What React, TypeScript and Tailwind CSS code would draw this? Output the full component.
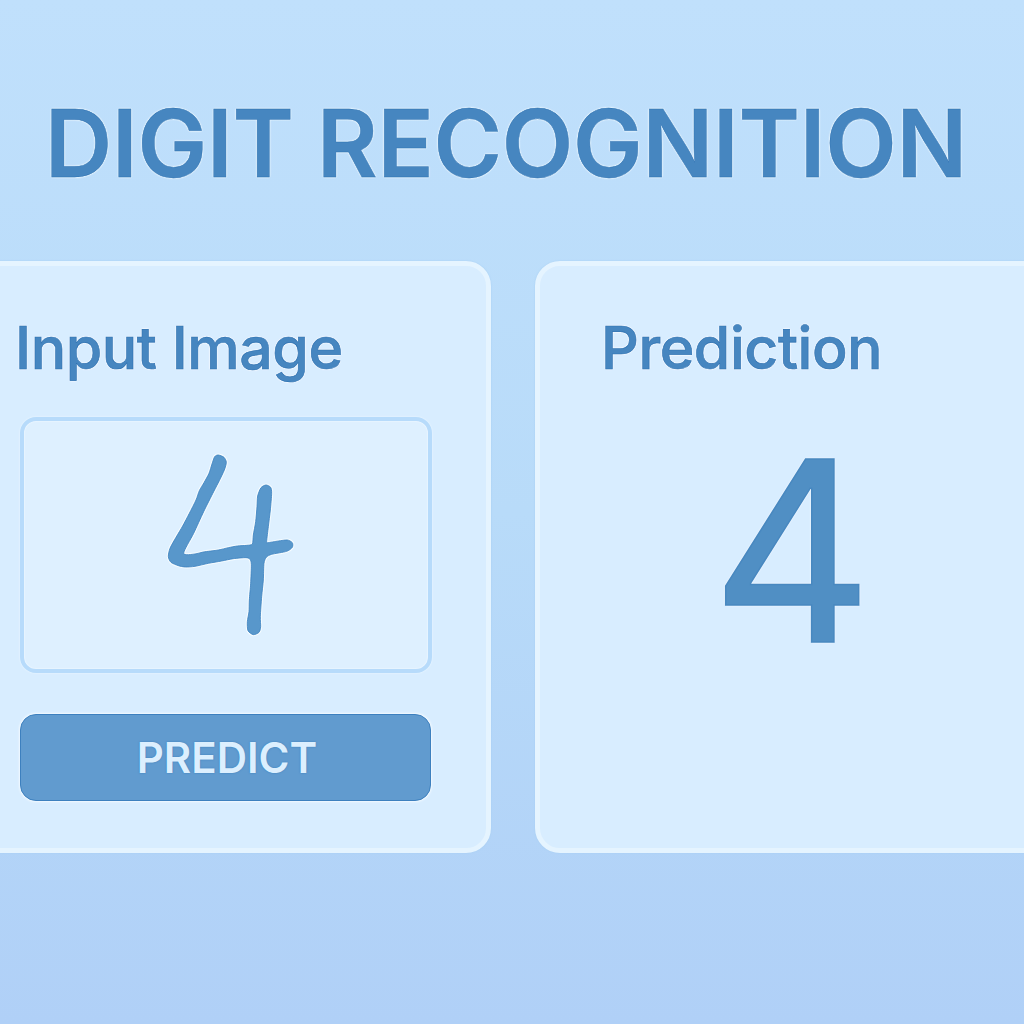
import React from "react";

const outline: [number, number][] = [
  [205, 45], [194, 50], [186, 72], [177, 100], [162, 128], [148, 152], [138, 180], [118, 220], [98, 258],
  [78, 292], [60, 325], [55, 350], [63, 367], [85, 377], [106, 381], [135, 379], [175, 370], [215, 363],
  [250, 356], [288, 353], [300, 358], [304, 374], [302, 430], [298, 480], [297, 515], [292, 545], [294, 572],
  [310, 584], [327, 577], [332, 560], [331, 530], [335, 470], [340, 420], [342, 370], [349, 352], [365, 343],
  [410, 334], [427, 322], [427, 308], [412, 300], [385, 303], [353, 308], [350, 304], [355, 260], [361, 210],
  [365, 160], [362, 142], [348, 135], [333, 143], [323, 168], [321, 200], [317, 245], [310, 285], [307, 312],
  [290, 316], [262, 318], [235, 323], [205, 330], [160, 336], [135, 342], [101, 340],
  [131, 280], [161, 215], [191, 155], [208, 122], [223, 90], [229, 67], [222, 52],
];

// Closed Catmull-Rom spline through every point of the outline.
function smoothPath(points: [number, number][]) {
  const n = points.length;
  const at = (i: number) => points[(i + n) % n];
  const curves = points.map((p, i) => {
    const before = at(i - 1);
    const next = at(i + 1);
    const after = at(i + 2);
    const c1 = `${p[0] + (next[0] - before[0]) / 8} ${p[1] + (next[1] - before[1]) / 8}`;
    const c2 = `${next[0] - (after[0] - p[0]) / 8} ${next[1] - (after[1] - p[1]) / 8}`;
    return `C${c1} ${c2} ${next[0]} ${next[1]}`;
  });
  return `M${points[0][0]} ${points[0][1]} ${curves.join(" ")} Z`;
}

function HandwrittenDigit() {
  const d = smoothPath(outline);
  return (
    <svg viewBox="24 421 404 248" className="block h-full w-full" role="img" aria-label="Handwritten digit">
      <g transform="translate(150 440) scale(0.33333)">
        <path d={d} fill="none" stroke="#f6fcff" strokeWidth="9" strokeLinejoin="round" />
        <path d={d} fill="#5897cb" stroke="#3c82c0" strokeWidth="2.5" strokeLinejoin="round" />
      </g>
    </svg>
  );
}

const card =
  "h-[592px] rounded-[25px] border-[5px] border-[#e5f4ff] bg-[#d8edff] shadow-[0_0_2px_#a5cdf2]";
const heading =
  "text-[59px] font-medium leading-[60px] tracking-[-0.45px] whitespace-nowrap text-[#4686c0] [-webkit-text-stroke:0.6px_#2c70b1] [text-shadow:0_0_2px_#fff,0_0_2px_#fff,0_0_2px_#fff]";

export default function App() {
  return (
    <main className="h-[1024px] w-[1024px] overflow-hidden bg-linear-to-b from-[#c0e0fc] via-[#b8dbf9] via-50% to-[#b0d0f7] font-['Inter',sans-serif]">
      <header className="h-[261px] pt-[97px] pl-[45px]">
        <h1 className="text-[93px] font-semibold leading-[93px] tracking-[-0.2px] whitespace-nowrap text-[#4686c0] [-webkit-text-stroke:0.4px_#2c70b1] [text-shadow:0_0_2px_#f0f9ff,0_0_2px_#f0f9ff,0_0_2px_#f0f9ff]">
          DIGIT RECOGNITION
        </h1>
      </header>
      <div className="-ml-[43px] grid w-[1112px] grid-cols-2 gap-11">
        <section className={card + " pt-[52px] pl-[58px]"}>
          <h2 className={heading + " -ml-[5px]"}>Input Image</h2>
          <div className="mt-[39px] h-[256px] w-[412px] rounded-[16px] border-4 border-[#b7dbfb] bg-[#def0ff] shadow-[0_0_2px_#f2faff,inset_0_0_2px_#fff]">
            <HandwrittenDigit />
          </div>
          <button className="mt-[41px] block h-[87px] w-[411px] rounded-[16px] border border-[#3d80bf] bg-[#619bcf] pl-[3px] text-[42px] font-semibold leading-[85px] text-[#dceffe] shadow-[0_0_2px_1px_#f3faff] [text-shadow:0_0_2px_#367bba]">
            PREDICT
          </button>
        </section>
        <section className={card + " pt-[52px] pl-[62px]"}>
          <h2 className={heading + " -ml-px"}>Prediction</h2>
          <p className="mt-[47px] ml-[109px] h-[252px] w-[160px] text-[251px] font-normal leading-[252px] text-[#508fc4] [-webkit-text-stroke:1.5px_#4888c0] [text-shadow:0_0_3px_#fff,0_0_2px_#fff,0_0_2px_#fff]">
            4
          </p>
        </section>
      </div>
    </main>
  );
}
